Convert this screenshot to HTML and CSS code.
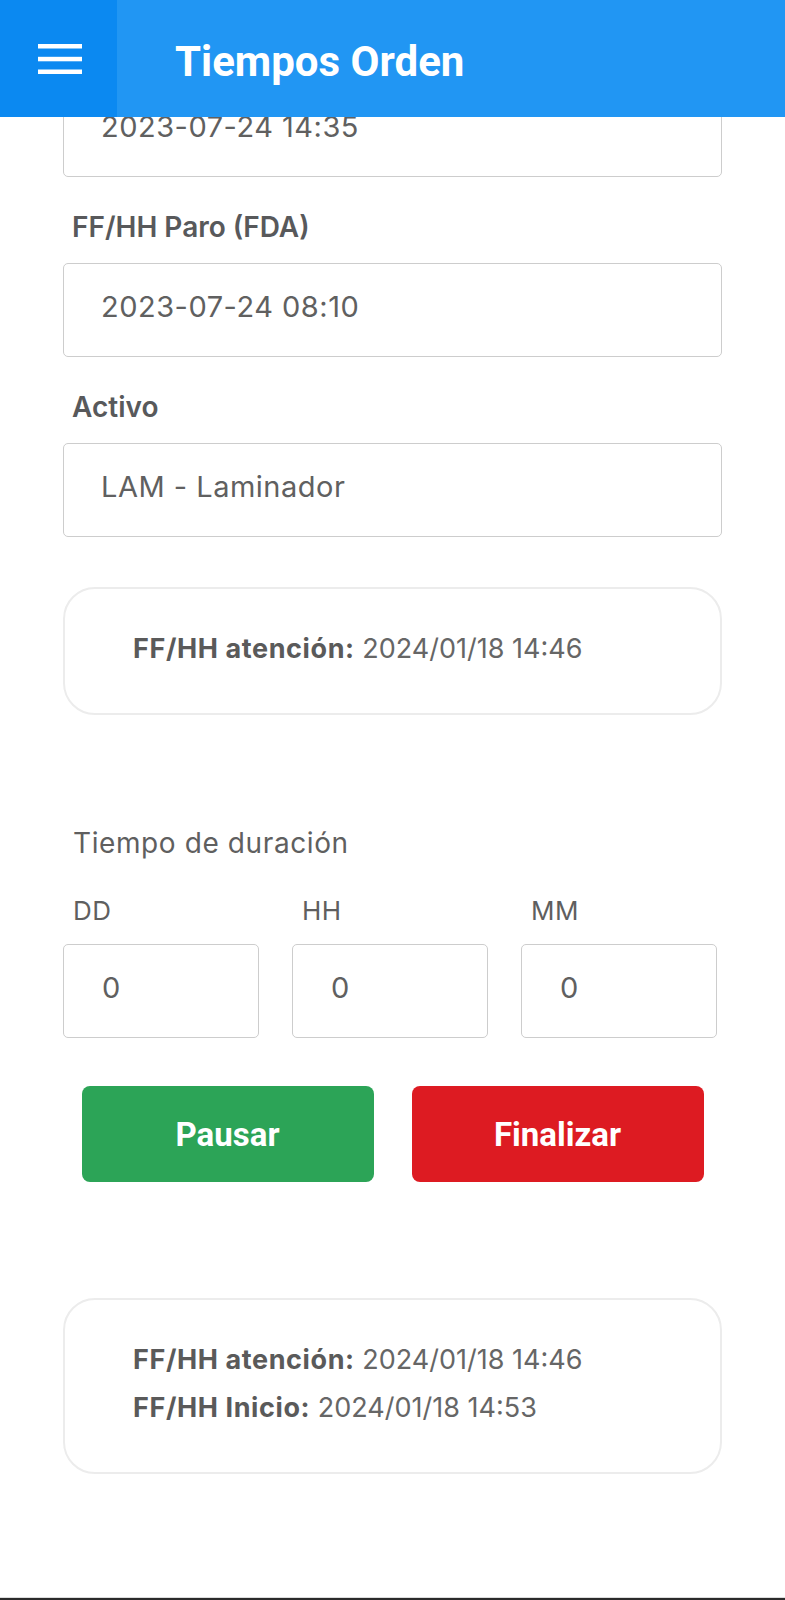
FILE: index.html
```html
<!DOCTYPE html>
<html lang="es">
<head>
<meta charset="utf-8">
<title>Tiempos Orden</title>
<link rel="stylesheet" href="styles.css">
</head>
<body>
<div class="page">
  <header class="appbar">
    <div class="menu-btn">
      <svg class="menu-icon" width="44" height="30" viewBox="0 0 44 30">
        <rect x="0" y="0" width="44" height="4.5" fill="#fff"/>
        <rect x="0" y="12.8" width="44" height="4.5" fill="#fff"/>
        <rect x="0" y="25.5" width="44" height="4.5" fill="#fff"/>
      </svg>
    </div>
    <h1 class="title">Tiempos Orden</h1>
  </header>

  <main class="content">
    <div class="input">2023-07-24 14:35</div>

    <div class="field-label">FF/HH Paro (FDA)</div>
    <div class="input">2023-07-24 08:10</div>

    <div class="field-label">Activo</div>
    <div class="input">LAM - Laminador</div>

    <div class="card card-first">
      <p class="card-line"><b>FF/HH atención:</b> 2024/01/18 14:46</p>
    </div>

    <div class="section-label">Tiempo de duración</div>
    <div class="duration">
      <div class="dur-col">
        <div class="dur-label">DD</div>
        <div class="input small">0</div>
      </div>
      <div class="dur-col">
        <div class="dur-label">HH</div>
        <div class="input small">0</div>
      </div>
      <div class="dur-col">
        <div class="dur-label">MM</div>
        <div class="input small">0</div>
      </div>
    </div>

    <div class="actions">
      <button class="btn btn-pause">Pausar</button>
      <button class="btn btn-finish">Finalizar</button>
    </div>

    <div class="card card-last">
      <p class="card-line"><b>FF/HH atención:</b> 2024/01/18 14:46</p>
      <p class="card-line"><b>FF/HH Inicio:</b> 2024/01/18 14:53</p>
    </div>
  </main>

  <footer class="bottom-line"></footer>
</div>
</body>
</html>
```

FILE: styles.css
```css
* { box-sizing: border-box; }

html, body {
  margin: 0;
  padding: 0;
  background: #ffffff;
}

body {
  font-family: Inter, "Open Sans", sans-serif;
  color: #5a5a5a;
}

.page {
  position: relative;
  min-height: 1600px;
  display: flex;
  flex-direction: column;
}

.appbar {
  position: absolute;
  top: 0;
  left: 0;
  right: 0;
  height: 117px;
  background: #2196f3;
  display: flex;
  align-items: center;
  z-index: 2;
}

.menu-btn {
  width: 117px;
  height: 117px;
  background: #0b89f1;
  display: flex;
  align-items: center;
  justify-content: center;
  padding-left: 2px;
}

.menu-icon { display: block; }

.title {
  margin: 0 0 0 58px;
  padding-top: 5px;
  font-family: Roboto, "Liberation Sans", sans-serif;
  font-weight: 700;
  font-size: 42px;
  color: #ffffff;
}

.content {
  padding: 83px 63px 0 63px;
  display: flex;
  flex-direction: column;
}

.input {
  height: 94px;
  border: 1px solid #cdcdcd;
  border-radius: 5px;
  padding-left: 37px;
  padding-bottom: 7px;
  display: flex;
  align-items: center;
  font-size: 29px;
  letter-spacing: 0.5px;
  color: #606060;
  background: #fff;
}

.field-label {
  margin: 33px 0 19px;
  padding-left: 9px;
  font-size: 28px;
  line-height: 34px;
  font-weight: 600;
  color: #58595b;
}

.card {
  border: 2px solid #ececec;
  border-radius: 32px;
  padding: 36px 20px 40px 68px;
}

.card-first { margin-top: 50px; }
.card-last { margin-top: 116px; }

.card-line {
  margin: 0;
  font-size: 27px;
  line-height: 48px;
  color: #666666;
}

.card-line b {
  font-weight: 700;
  letter-spacing: 0.6px;
  color: #5a5a5a;
}

.section-label {
  margin-top: 112px;
  padding-left: 10px;
  font-size: 28px;
  line-height: 32px;
  letter-spacing: 0.6px;
  color: #5f5f5f;
}

.duration {
  margin-top: 37px;
  display: grid;
  grid-template-columns: 196px 196px 196px;
  column-gap: 33px;
}

.dur-label {
  padding-left: 10px;
  font-size: 26px;
  line-height: 30px;
  letter-spacing: 0.5px;
  color: #5f5f5f;
  margin-bottom: 18px;
}

.input.small { padding-left: 38px; }

.actions {
  margin-top: 48px;
  display: flex;
  justify-content: center;
  gap: 38px;
}

.btn {
  width: 292px;
  height: 96px;
  border: none;
  border-radius: 8px;
  font-family: Roboto, "Liberation Sans", sans-serif;
  font-weight: 700;
  font-size: 33px;
  color: #ffffff;
  padding: 0;
}

.btn-pause { background: #2ca457; }
.btn-finish { background: #dd1b22; }

.bottom-line {
  margin-top: auto;
  height: 3px;
  background: #2b2b2b;
  border-top: 1px solid #dcdcdc;
}
```
